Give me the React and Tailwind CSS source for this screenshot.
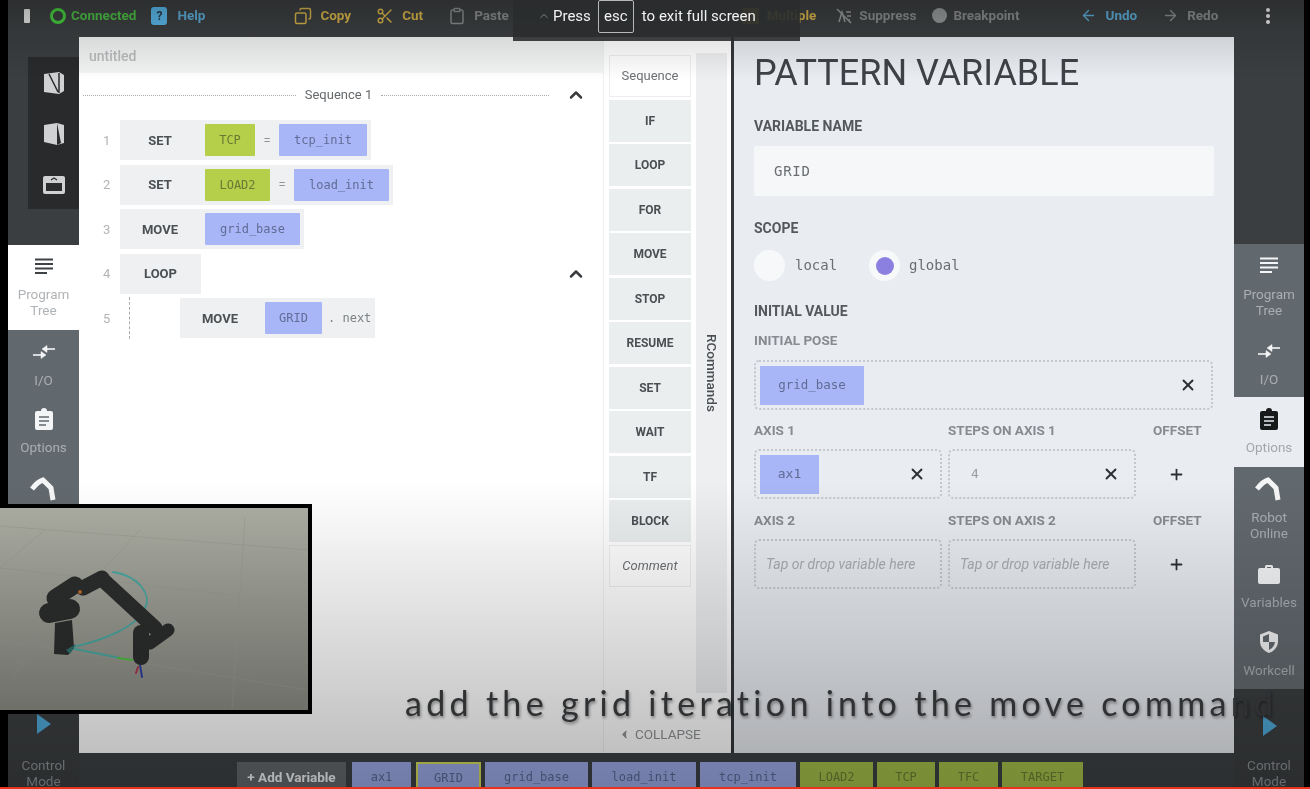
import { ArrowLeft, ArrowRight, ChevronLeft, ChevronUp, Clipboard, Copy, Plus, Scissors, X } from "lucide-react";

const mono = "font-['DejaVu_Sans_Mono',monospace]";

/* ===============================
   SMALL ICONS
================================ */
const TreeIcon = ({ color = "#f4f5f6" }) => (
    <svg width="20" height="20" viewBox="0 0 20 20" fill="none" stroke={color} strokeWidth="2">
        <path d="M1 2.5h18M1 7h18M1 11.5h18M1 16h12" />
    </svg>
);

const IoIcon = () => (
    <svg width="24" height="18" viewBox="0 0 24 18" fill="#f4f5f6" stroke="#f4f5f6" strokeWidth="1.6">
        <path d="M23 6H12" />
        <path d="M15 2.5 10 6l5 3.5z" strokeWidth="0.5" />
        <path d="M1 12h11" />
        <path d="M9 8.5l5 3.5-5 3.5z" strokeWidth="0.5" />
    </svg>
);

const OptionsIcon = ({ color = "#f4f5f6", lines = "#62696e" }) => (
    <svg width="20" height="22" viewBox="0 0 20 22">
        <path d="M3 3h4a3 3 0 0 1 6 0h4a2 2 0 0 1 2 2v15a2 2 0 0 1-2 2H3a2 2 0 0 1-2-2V5a2 2 0 0 1 2-2z" fill={color} />
        <path d="M5 9h10M5 13h10M5 17h7" stroke={lines} strokeWidth="1.7" />
    </svg>
);

const ArmIcon = () => (
    <svg width="28" height="24" viewBox="0 0 28 24" fill="none" stroke="#f4f5f6" strokeWidth="5">
        <path d="M2 12C6 7 9 4 13 3l8 8 2 12" />
    </svg>
);

const CaseIcon = () => (
    <svg width="22" height="20" viewBox="0 0 22 20" fill="#f4f5f6">
        <path d="M7 4V2.5A1.5 1.5 0 0 1 8.5 1h5A1.5 1.5 0 0 1 15 2.5V4h5a2 2 0 0 1 2 2v12a2 2 0 0 1-2 2H2a2 2 0 0 1-2-2V6a2 2 0 0 1 2-2zm2-1v1h4V3z" fillRule="evenodd" />
    </svg>
);

const ShieldIcon = () => (
    <svg width="20" height="24" viewBox="0 0 20 24">
        <path d="M10 1 19 4.5V11c0 6-4 10-9 12C5 21 1 17 1 11V4.5z" fill="#f4f5f6" />
        <path d="M10 4v8H4V6.5zM10 12h6c-.5 4-3 6.500-6 8z" fill="#62696e" />
    </svg>
);

const PlayIcon = () => (
    <svg width="15" height="20" viewBox="0 0 15 20">
        <path d="M1 0 15 10 1 20z" fill="#4fa9d8" />
    </svg>
);

const ProgramTabIcon = ({ kind }) => (
    <svg width="22" height="24" viewBox="0 0 22 24">
        {kind === "a" && (
            <>
                <path d="M1 3 16 1l5 3v16l-5 3-15-2z" fill="#cfd1d2" />
                <path d="M6 3l9 18M16 2v20" stroke="#2a2c2e" strokeWidth="1.500" />
            </>
        )}
        {kind === "b" && (
            <>
                <path d="M1 3 14 1l7 2v18l-7 2-13-3z" fill="#cfd1d2" />
                <path d="M14 1l4 20-4 2z" fill="#2a2c2e" />
            </>
        )}
        {kind === "c" && (
            <>
                <rect x="0" y="3" width="22" height="18" rx="2" fill="#cfd1d2" />
                <rect x="3" y="10" width="16" height="8" fill="#2a2c2e" />
                <path d="M8 7l3-2 3 2" stroke="#2a2c2e" strokeWidth="1.200" fill="none" />
            </>
        )}
    </svg>
);

/* ===============================
   SIDE RAILS
================================ */
function RailItem({ icon, label, active, h }) {
    return (
        <div className={`flex flex-col items-center ${h} ${active ? "bg-[#e9ecf1]" : "bg-[#62696e]"}`}>
            <div className="mt-[7px] flex h-[30px] items-center justify-center">{icon}</div>
            <div className={`mt-[5px] w-[66px] text-center text-[13.5px] leading-[16px] ${active ? "text-[#a4a8ac]" : "text-[#a9aeb2]"}`}>
                {label}
            </div>
        </div>
    );
}

function LeftRail() {
    return (
        <div className="flex w-[71px] shrink-0 flex-col bg-[#3b3e40]">
            <div className="h-[208px] pt-[20px] pl-[20px]">
                <div className="flex h-[152px] flex-col items-center gap-[27px] bg-[#282a2c] pt-[14px]">
                    <ProgramTabIcon kind="a" />
                    <ProgramTabIcon kind="b" />
                    <ProgramTabIcon kind="c" />
                </div>
            </div>
            <div className="flex h-[85px] flex-col items-center bg-white pt-[12px]">
                <TreeIcon color="#3f4346" />
                <div className="mt-[9px] text-center text-[13.5px] leading-[16px] text-[#b0b3b6]">Program<br />Tree</div>
            </div>
            <RailItem h="h-[68px]" icon={<IoIcon />} label="I/O" />
            <RailItem h="h-[70px]" icon={<OptionsIcon />} label="Options" />
            <RailItem h="h-[246px]" icon={<ArmIcon />} label="" />
            <div className="flex flex-col items-center pt-[1px]">
                <PlayIcon />
                <div className="mt-[23px] text-center text-[13.5px] leading-[16px] text-[#8d9195]">Control<br />Mode</div>
            </div>
        </div>
    );
}

function RightRail() {
    return (
        <div className="flex w-[70px] shrink-0 flex-col bg-[#3b3e40]">
            <div className="h-[208px]" />
            <div className="flex flex-col">
                <RailItem h="h-[85px]" icon={<TreeIcon />} label={<>Program<br />Tree</>} />
                <RailItem h="h-[68px]" icon={<IoIcon />} label="I/O" />
                <RailItem h="h-[70px]" active icon={<OptionsIcon color="#17191a" lines="#e9ecf1" />} label="Options" />
                <RailItem h="h-[85px]" icon={<ArmIcon />} label={<>Robot<br />Online</>} />
                <RailItem h="h-[68px]" icon={<CaseIcon />} label="Variables" />
                <RailItem h="h-[69px]" icon={<ShieldIcon />} label="Workcell" />
            </div>
            <div className="flex flex-col items-center pt-[27px]">
                <PlayIcon />
                <div className="mt-[21px] text-center text-[13.5px] leading-[16px] text-[#8d9195]">Control<br />Mode</div>
            </div>
        </div>
    );
}

/* ===============================
   TOP BAR
================================ */
function TopItem({ icon, label, color, ml, gap = "gap-[8px]" }) {
    return (
        <div className={`flex items-center ${gap} ${ml}`}>
            {icon}
            <span className={`text-[13.5px] font-bold ${color}`}>{label}</span>
        </div>
    );
}

function TopBar() {
    return (
        <div className="ml-[8px] mr-[6px] flex h-[37px] shrink-0 items-center bg-[#3d4042] pb-[6px] pl-[16px]">
            <div className="h-[14px] w-[6px] rounded-[1px] bg-[#e8e8e8]" />
            <TopItem
                ml="ml-[20px]"
                gap="gap-[5px]"
                color="text-[#4cc046]"
                label="Connected"
                icon={<div className="h-[16px] w-[16px] rounded-full border-[3px] border-[#46d040]" />}
            />
            <TopItem
                ml="ml-[15px]"
                gap="gap-[10px]"
                color="text-[#5fb0dc]"
                label="Help"
                icon={
                    <div className="flex h-[18px] w-[16px] items-center justify-center rounded-[3px] bg-[#5cbdf0] text-[12px] font-bold text-[#2d3e4a]">?</div>
                }
            />
            <TopItem ml="ml-[89px]" color="text-[#dcb84c]" label="Copy" icon={<Copy size={18} color="#dcb84c" className="-scale-x-100" />} />
            <TopItem ml="ml-[25px]" color="text-[#dcb84c]" label="Cut" icon={<Scissors size={18} color="#dcb84c" />} />
            <TopItem ml="ml-[25px]" color="text-[#8c8f91]" label="Paste" icon={<Clipboard size={18} color="#8c8f91" />} />
            <TopItem
                ml="ml-[234px]"
                color="text-[#dcb84c]"
                label="Multiple"
                icon={<div className="h-[16px] w-[16px] bg-[#b89c40]" />}
            />
            <TopItem
                ml="ml-[20px]"
                gap="gap-[7px]"
                color="text-[#8c8f91]"
                label="Suppress"
                icon={
                    <svg width="16" height="16" viewBox="0 0 16 16" fill="none" stroke="#999c9e" strokeWidth="1.5">
                        <path d="M1 1l14 14M3 14l3-10 3 10M10 4h5M11 8h4M12 12h2" />
                    </svg>
                }
            />
            <TopItem
                ml="ml-[16px]"
                gap="gap-[6px]"
                color="text-[#8c8f91]"
                label="Breakpoint"
                icon={<div className="h-[15px] w-[15px] rounded-full bg-[#999c9e]" />}
            />
            <TopItem ml="ml-[61px]" color="text-[#5fb0dc]" label="Undo" icon={<ArrowLeft size={17} color="#5fb0dc" />} />
            <TopItem ml="ml-[25px]" color="text-[#8c8f91]" label="Redo" icon={<ArrowRight size={17} color="#8c8f91" />} />
            <div className="ml-[48px] flex flex-col gap-[2px]">
                <div className="h-[4px] w-[4px] rounded-full bg-[#f2f2f2]" />
                <div className="h-[4px] w-[4px] rounded-full bg-[#f2f2f2]" />
                <div className="h-[4px] w-[4px] rounded-full bg-[#f2f2f2]" />
            </div>
        </div>
    );
}

/* ===============================
   PROGRAM TREE
================================ */
const Chip = ({ children, green, w }) => (
    <div className={`flex h-[32px] items-center justify-center rounded-[1px] text-[12px] ${mono} ${w} ${green ? "bg-[#b5cf4a] text-[#6a7a35]" : "bg-[#a8b6f7] text-[#5f6d96]"}`}>
        {children}
    </div>
);

function Row({ n, label, labelW = "w-[85px] pr-[5px]", children, indent, hasLine }) {
    return (
        <div className="flex h-[44.5px] items-center pb-[4px]">
            <div className="w-[40px] pl-[24px] text-[13px] text-[#b1b3b5]">{n}</div>
            {hasLine && <div className="ml-[10px] h-[42px] w-[1px] border-l border-dashed border-[#a9abad]" />}
            <div className={`flex h-[40px] items-center bg-[#eef0f1] ${indent || "ml-[1px]"} pr-[4px]`}>
                <div className={`text-center text-[13px] font-bold text-[#4b5054] ${labelW}`}>{label}</div>
                {children}
            </div>
        </div>
    );
}

const eq = (w) => <div className={`text-center text-[13px] text-[#8f9396] ${w}`}>=</div>;

function Program() {
    return (
        <div className="flex min-w-0 flex-1 flex-col">
            <div className="flex h-[36px] items-center bg-[#f3f4f4] pl-[10px] pt-[2px] text-[14px] font-medium text-[#b9bbbd]">untitled</div>
            <div className="mb-[3px] flex h-[44px] items-center pl-[4px]">
                <div className="w-[213px] border-t border-dotted border-[#a9abad]" />
                <div className="w-[85px] text-center text-[13px] text-[#65696c]">Sequence 1</div>
                <div className="w-[168px] border-t border-dotted border-[#a9abad]" />
                <ChevronUp size={20} strokeWidth={3} color="#3a3d3f" className="ml-[17px]" />
            </div>
            <Row n="1" label="SET">
                <Chip green w="w-[50px]">TCP</Chip>
                {eq("w-[24px]")}
                <Chip w="w-[88px]">tcp_init</Chip>
            </Row>
            <Row n="2" label="SET">
                <Chip green w="w-[65px]">LOAD2</Chip>
                {eq("w-[24px]")}
                <Chip w="w-[95px]">load_init</Chip>
            </Row>
            <Row n="3" label="MOVE">
                <Chip w="w-[95px]">grid_base</Chip>
            </Row>
            <div className="relative">
                <Row n="4" label="LOOP" labelW="w-[77px] pl-[4px]" />
                <ChevronUp size={20} strokeWidth={3} color="#3a3d3f" className="absolute left-[487px] top-[10px]" />
            </div>
            <Row n="5" label="MOVE" labelW="w-[85px] pr-[5px]" indent="ml-[50px]" hasLine>
                <Chip w="w-[57px]">GRID</Chip>
                <div className={`pl-[6px] text-[12px] text-[#7e8285] ${mono}`}>. next</div>
            </Row>
        </div>
    );
}

/* ===============================
   COMMAND PALETTE
================================ */
const commands = ["IF", "LOOP", "FOR", "MOVE", "STOP", "RESUME", "SET", "WAIT", "TF", "BLOCK"];

function Palette() {
    return (
        <div className="flex w-[128px] shrink-0 border-l border-[#f0f1f2] pl-[5px] pt-[18px]">
            <div className="flex w-[82px] flex-col gap-[2.500px]">
                <div className="flex h-[42px] items-center justify-center border border-[#eceeef] bg-white text-[13px] text-[#6d7175]">Sequence</div>
                {commands.map(c => (
                    <div key={c} className="flex h-[42px] items-center justify-center bg-[#ebeeef] text-[12px] font-bold text-[#4b4f53]">
                        {c}
                    </div>
                ))}
                <div className="flex h-[42px] items-center justify-center border border-[#eceeef] bg-white text-[13px] italic text-[#6d7175]">Comment</div>
                <div className="ml-[9px] mt-[135px] flex items-center gap-[4px] whitespace-nowrap text-[13.5px] text-[#8e9194]">
                    <ChevronLeft size={13} fill="#8e9194" className="shrink-0" />
                    COLLAPSE
                </div>
            </div>
            <div className="ml-[5px] -mt-[2px] flex h-[640px] w-[31px] items-center justify-center bg-[#edeff1]">
                <span className="text-[13.5px] font-medium text-[#4b4f53] [writing-mode:vertical-rl]">RCommands</span>
            </div>
        </div>
    );
}

/* ===============================
   PATTERN VARIABLE FORM
================================ */
const Section = ({ children, className }) => (
    <div className={`text-[14px] font-bold text-[#54585c] ${className}`}>{children}</div>
);

const SubLabel = ({ children, className }) => (
    <div className={`text-[13.5px] font-bold text-[#878b8f] ${className}`}>{children}</div>
);

const DashBox = ({ w, children }) => (
    <div className={`flex h-[50px] items-center justify-between rounded-[5px] border-2 border-dotted border-[#c4c8cd] pl-[4px] pr-[14px] ${w}`}>
        {children}
    </div>
);

const Close = () => <X size={18} strokeWidth={2.5} color="#2d3033" />;

const Placeholder = () => (
    <div className="pl-[6px] text-[14px] italic text-[#a9adb1]">Tap or drop variable here</div>
);

function AxisLabels({ a, b }) {
    return (
        <div className="flex">
            <SubLabel className="w-[194px]">{a}</SubLabel>
            <SubLabel className="w-[205px]">{b}</SubLabel>
            <SubLabel>OFFSET</SubLabel>
        </div>
    );
}

function Form() {
    return (
        <div className="w-[500px] shrink-0 bg-[#e9ecf1] pl-[20px] pr-[20px]">
            <h1 className="mt-[14px] text-[36px] leading-[44px] font-normal text-[#3f4347]">PATTERN VARIABLE</h1>
            <Section className="mt-[22px] leading-[18px]">VARIABLE NAME</Section>
            <div className={`mt-[11px] flex h-[50px] items-center rounded-[2px] bg-[#f6f7f9] pl-[20px] text-[14px] tracking-[0.7px] text-[#6a6e72] ${mono}`}>GRID</div>
            <Section className="mt-[23px] leading-[18px]">SCOPE</Section>
            <div className={`mt-[13px] flex h-[31px] items-center text-[14px] text-[#6a6e72] ${mono}`}>
                <div className="h-[31px] w-[31px] rounded-full bg-[#f7f8fa]" />
                <span className="ml-[10px] w-[74px]">local</span>
                <div className="flex h-[31px] w-[31px] items-center justify-center rounded-full bg-[#f7f8fa]">
                    <div className="h-[18px] w-[18px] rounded-full bg-[#8b7fe0]" />
                </div>
                <span className="ml-[9px]">global</span>
            </div>
            <Section className="mt-[21px] leading-[18px]">INITIAL VALUE</Section>
            <SubLabel className="mt-[11px] leading-[18px]">INITIAL POSE</SubLabel>
            <div className="mt-[11px]">
                <DashBox w="w-[459px]">
                    <div className={`flex h-[39px] w-[104px] items-center justify-center bg-[#a8b6f7] text-[12.5px] text-[#5f6d96] ${mono}`}>grid_base</div>
                    <Close />
                </DashBox>
            </div>
            <div className="mt-[11px] leading-[18px]">
                <AxisLabels a="AXIS 1" b="STEPS ON AXIS 1" />
            </div>
            <div className="mt-[10px] flex items-center gap-[6px]">
                <DashBox w="w-[188px]">
                    <div className={`flex h-[39px] w-[59px] items-center justify-center bg-[#a8b6f7] text-[13px] text-[#5f6d96] ${mono}`}>ax1</div>
                    <Close />
                </DashBox>
                <DashBox w="w-[188px]">
                    <div className={`pl-[17px] text-[13px] text-[#9a9ea2] ${mono}`}>4</div>
                    <Close />
                </DashBox>
                <Plus size={17} strokeWidth={2.5} color="#2d3033" className="ml-[26px]" />
            </div>
            <div className="mt-[12px] leading-[18px]">
                <AxisLabels a="AXIS 2" b="STEPS ON AXIS 2" />
            </div>
            <div className="mt-[10px] flex items-center gap-[6px]">
                <DashBox w="w-[188px]"><Placeholder /></DashBox>
                <DashBox w="w-[188px]"><Placeholder /></DashBox>
                <Plus size={17} strokeWidth={2.5} color="#2d3033" className="ml-[26px]" />
            </div>
        </div>
    );
}

/* ===============================
   VARIABLE STRIP
================================ */
const variables = [
    { name: "ax1", w: "w-[59px]" },
    { name: "GRID", w: "w-[65px] ml-[1px]", selected: true },
    { name: "grid_base", w: "w-[103px]" },
    { name: "load_init", w: "w-[104px]" },
    { name: "tcp_init", w: "w-[96px]" },
    { name: "LOAD2", w: "w-[73px]", green: true },
    { name: "TCP", w: "w-[58px]", green: true },
    { name: "TFC", w: "w-[59px]", green: true },
    { name: "TARGET", w: "w-[81px]", green: true },
];

function VariableStrip() {
    return (
        <div className="flex h-[36px] shrink-0 items-end gap-[4px] bg-[#3d4144] pl-[158px]">
            <div className="mr-[2px] flex h-[27px] w-[109px] items-center justify-center bg-[#63686c] pt-[3px] text-[13.5px] font-bold text-[#f2f3f4]">+ Add Variable</div>
            {variables.map(v => (
                <div
                    key={v.name}
                    className={`flex h-[27px] items-center justify-center pt-[3px] text-[12px] ${mono} ${v.w} ${v.green ? "bg-[#a6c04a] text-[#6d8036]" : "bg-[#9dabe8] text-[#5d6a96]"} ${v.selected ? "border-2 border-b-0 border-[#d6dc5a]" : ""}`}
                >
                    {v.name}
                </div>
            ))}
        </div>
    );
}

/* ===============================
   ROBOT VIEW (picture in picture)
================================ */
function RobotView() {
    return (
        <div className="absolute left-0 top-[504px] h-[210px] w-[312px] border-[4px] border-l-0 border-black bg-gradient-to-b from-[#adaea3] to-[#8c8d85]">
            <svg width="308" height="202" viewBox="0 0 308 202" fill="none" strokeLinecap="round">
                <g stroke="#9b9c92" strokeWidth="0.7">
                    <path d="M0 18 308 42M0 60 308 96M0 132 308 182M45 22 0 60M140 22 40 130 12 170M245 10 232 202" />
                </g>
                <path d="M113 64C140 68 152 88 145 100 138 118 105 132 73 139" stroke="#4aa8a2" strokeWidth="1.800" />
                <path d="M70 140 120 150" stroke="#4aa8a2" strokeWidth="2" />
                <path d="M118 150 132 152" stroke="#4fbf3f" strokeWidth="2" />
                <path d="M138 159 136 165" stroke="#a8384a" strokeWidth="2" />
                <path d="M140 157 142 169" stroke="#2f3fa0" strokeWidth="2" />
                <path d="M55 115 72 112 74 140 68 147 54 146z" fill="#2c2d2d" />
                <path d="M66 142 76 136 70 146z" fill="#2f6f6c" />
                <g stroke="#2c2d2d">
                    <path d="M49 105 70 101" strokeWidth="20" />
                    <path d="M55 90 75 77" strokeWidth="17" />
                    <path d="M83 80 102 70" strokeWidth="15" />
                    <path d="M103 72 155 120" strokeWidth="15" />
                    <path d="M150 135 168 122" strokeWidth="13" />
                    <path d="M141 125V149" strokeWidth="16" />
                </g>
                <circle cx="80" cy="84" r="2" fill="#b96a2a" />
            </svg>
        </div>
    );
}

/* ===============================
   RENDER
================================ */
export default function App() {
    return (
        <div className="relative h-[789px] w-[1310px] overflow-hidden bg-black font-['Roboto',sans-serif] [filter:blur(0.6px)]">
            <div className="flex h-full flex-col">
                <TopBar />
                <div className="flex min-h-0 flex-1 pl-[8px] pr-[6px]">
                    <LeftRail />
                    <div className="flex min-w-0 flex-1 flex-col">
                        <div className="flex min-h-0 flex-1 bg-white">
                            <Program />
                            <Palette />
                            <div className="w-[3px] shrink-0 bg-[#33373a]" />
                            <Form />
                        </div>
                        <VariableStrip />
                    </div>
                    <RightRail />
                </div>
            </div>

            <RobotView />

            {/* video dimming */}
            <div className="pointer-events-none absolute inset-0 bg-[linear-gradient(to_bottom,rgba(0,0,0,0.28)_0,rgba(0,0,0,0.1)_40px,rgba(0,0,0,0)_80px,rgba(0,0,0,0)_480px,rgba(0,0,0,0.28)_789px)]" />

            {/* full screen notice */}
            <div className="absolute left-[513px] top-0 flex h-[41px] w-[287px] items-start bg-[#2a2c2e]/90 pl-[40px] text-[15px] text-[#f1f1f1]">
                <ChevronUp size={14} color="#55585a" className="absolute left-[24px] top-[9px]" />
                <span className="mt-[5px]">Press</span>
                <span className="ml-[7px] flex h-[33px] w-[36px] items-center justify-center rounded-[2px] border border-[#b8b8b8]">esc</span>
                <span className="ml-[8px] mt-[5px]">to exit full screen</span>
            </div>

            {/* caption */}
            <div className="absolute left-[405px] top-[682px] whitespace-nowrap font-['Lato',sans-serif] text-[34px] leading-[42px] tracking-[4.3px] text-[#2f3133] [text-shadow:1px_2px_3px_rgba(0,0,0,0.4)]">
                add the grid iteration into the move command
            </div>

            {/* playback progress */}
            <div className="absolute bottom-0 left-0 h-[2px] w-full bg-[#e8341c]" />
        </div>
    );
}
